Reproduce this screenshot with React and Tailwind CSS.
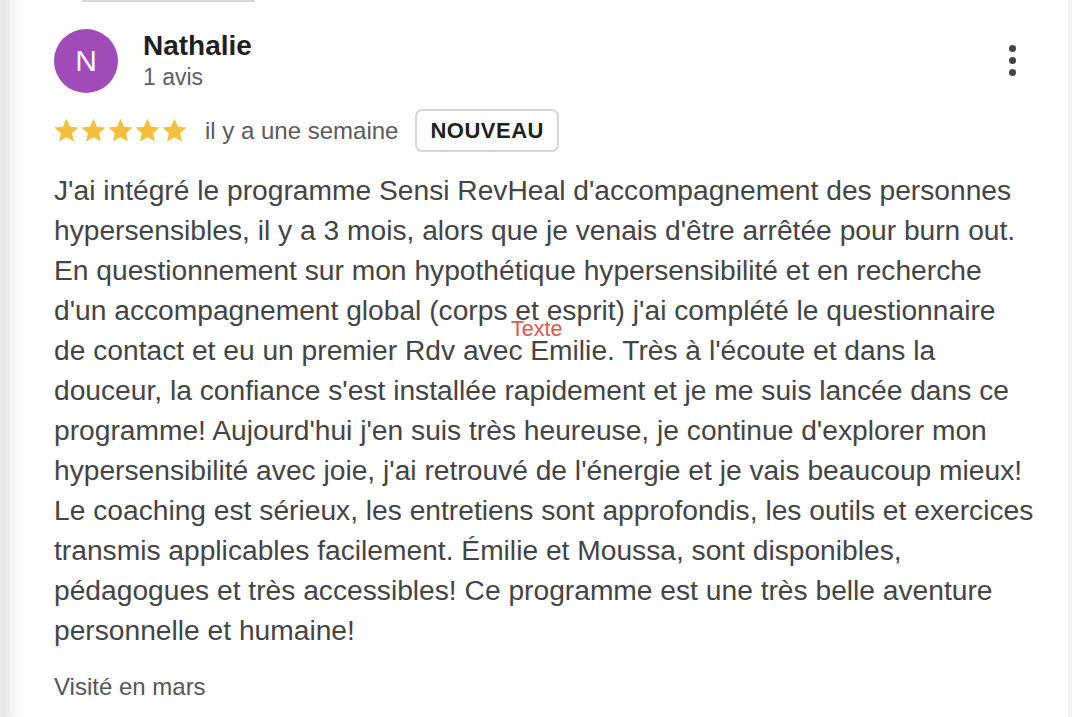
const lines = [
  "J'ai intégré le programme Sensi RevHeal d'accompagnement des personnes",
  "hypersensibles, il y a 3 mois, alors que je venais d'être arrêtée pour burn out.",
  "En questionnement sur mon hypothétique hypersensibilité et en recherche",
  "d'un accompagnement global (corps et esprit) j'ai complété le questionnaire",
  "de contact et eu un premier Rdv avec Emilie. Très à l'écoute et dans la",
  "douceur, la confiance s'est installée rapidement et je me suis lancée dans ce",
  "programme! Aujourd'hui j'en suis très heureuse, je continue d'explorer mon",
  "hypersensibilité avec joie, j'ai retrouvé de l'énergie et je vais beaucoup mieux!",
  "Le coaching est sérieux, les entretiens sont approfondis, les outils et exercices",
  "transmis applicables facilement. Émilie et Moussa, sont disponibles,",
  "pédagogues et très accessibles! Ce programme est une très belle aventure",
  "personnelle et humaine!",
];

const Star = () => (
  <svg viewBox="0 0 24 24" className="w-[27px] h-[27px]">
    <path
      d="M12 1.6l3.1 7 7.6.7-5.75 5.05 1.7 7.45L12 17.9l-6.65 3.9 1.7-7.45L1.3 9.3l7.6-.7z"
      fill="#f4bf3a"
    />
  </svg>
);

export default function App() {
  return (
    <div
      className="w-[1072px] h-[717px] flex bg-white overflow-hidden"
      style={{ fontFamily: '"Liberation Sans", Arial, sans-serif' }}
    >
      {/* left edge of the panel behind */}
      <div className="w-[21px] h-full bg-gradient-to-r from-[#e4e4e4] via-[#f3f3f3] to-[#fdfdfd] border-l-[2px] border-[#ececec]" />

      <div className="flex-1 relative">
        <div className="ml-[61px] w-[173px] h-[2px] bg-[#d6d6d6]" />

        <div className="pl-[33px]">
          {/* header */}
          <div className="flex justify-between pr-[52px] mt-[27px]">
            <div className="flex">
              <div className="w-[64px] h-[64px] rounded-full bg-[#a04bb7] flex items-center justify-center text-white text-[30px] leading-none">
                N
              </div>
              <div className="ml-[25px] pt-[1px]">
                <div className="text-[28px] leading-[32px] font-bold text-[#1f1f1f]">Nathalie</div>
                <div className="mt-[1px] text-[23px] leading-[28px] text-[#5f5f5f]">1 avis</div>
              </div>
            </div>
            <div className="mt-[16px] flex flex-col gap-[5px]">
              <div className="w-[7px] h-[7px] rounded-full bg-[#444]" />
              <div className="w-[7px] h-[7px] rounded-full bg-[#444]" />
              <div className="w-[7px] h-[7px] rounded-full bg-[#444]" />
            </div>
          </div>

          {/* rating row */}
          <div className="flex items-center mt-[16px] h-[43px]">
            <div className="flex -ml-[1px]">
              <Star />
              <Star />
              <Star />
              <Star />
              <Star />
            </div>
            <span className="ml-[17px] text-[24px] text-[#5a5a5a]">il y a une semaine</span>
            <span className="ml-[17px] h-[43px] px-[13px] flex items-center border-2 border-[#d6d6d6] rounded-[7px] text-[22px] font-bold tracking-[0.5px] text-[#1f1f1f]">
              NOUVEAU
            </span>
          </div>

          {/* body */}
          <div className="relative mt-[18px] text-[28.2px] leading-[40px] text-[#444]">
            {lines.map((l) => (
              <div key={l} className="whitespace-nowrap">
                {l}
              </div>
            ))}
            <span className="absolute left-[457px] top-[147px] text-[21.5px] leading-[24px] text-[#e0574a]">
              Texte
            </span>
          </div>

          <div className="mt-[21px] text-[24px] leading-[32px] text-[#555]">Visité en mars</div>
        </div>
      </div>

      <div className="w-[4px] h-full bg-[#f2f2f2]" />
    </div>
  );
}
